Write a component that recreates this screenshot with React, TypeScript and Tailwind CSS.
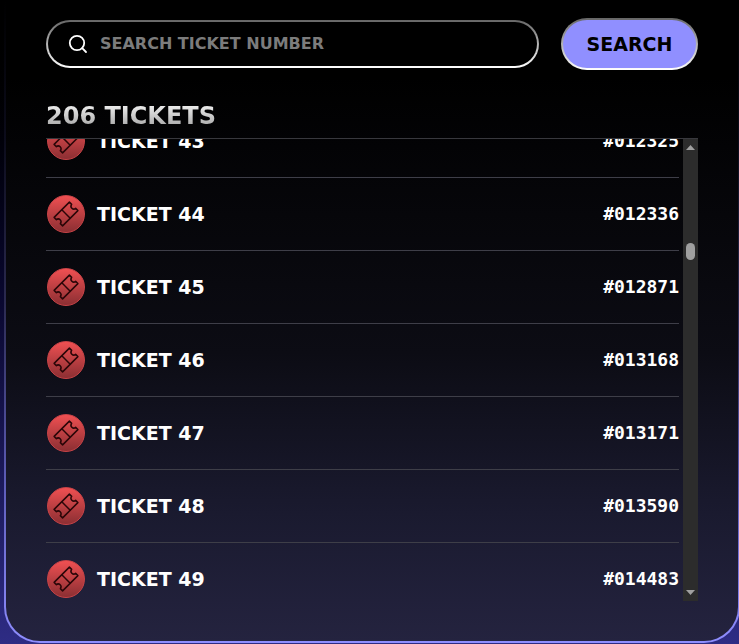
import { useLayoutEffect, useRef } from "react";

const tickets = [
  { name: "TICKET 43", number: "#012325" },
  { name: "TICKET 44", number: "#012336" },
  { name: "TICKET 45", number: "#012871" },
  { name: "TICKET 46", number: "#013168" },
  { name: "TICKET 47", number: "#013171" },
  { name: "TICKET 48", number: "#013590" },
  { name: "TICKET 49", number: "#014483" },
];

function TicketIcon() {
  return (
    <span className="flex size-[38px] shrink-0 items-center justify-center rounded-full border border-[#c94347] bg-linear-to-b from-[#f05052] to-[#8c2f33]">
      <svg viewBox="-14 -14 28 28" className="size-7" fill="none" stroke="#2a0608" strokeWidth="1.5" strokeLinejoin="round" aria-hidden="true">
        <g transform="rotate(-45)">
          <path d="M-10.8 -6H10.8V-2.8C7.4 -2.4 7.4 2.4 10.8 2.8V6H-10.8V2.8C-7.4 2.4 -7.4 -2.4 -10.8 -2.8Z" />
          <path d="M0 -6V6" />
        </g>
      </svg>
    </span>
  );
}

function SearchIcon() {
  return (
    <svg viewBox="0 0 20 20" className="size-5 shrink-0" fill="none" stroke="white" strokeWidth="1.8" aria-hidden="true">
      <circle cx="9" cy="9" r="7.2" />
      <path d="M14.2 14.2L18 18" strokeLinecap="round" />
    </svg>
  );
}

function ScrollTrack() {
  return (
    <div className="flex w-[15px] flex-col items-center bg-[#2c2c2c] py-1.5" aria-hidden="true">
      <svg viewBox="0 0 9 5" className="h-[5px] w-[9px]" fill="#a0a0a0">
        <path d="M0 5L4.5 0L9 5Z" />
      </svg>
      <div className="flex flex-1 flex-col pt-[93px]">
        <div className="h-[17px] w-[9px] rounded-full bg-[#9f9f9f]" />
      </div>
      <svg viewBox="0 0 9 5" className="h-[5px] w-[9px]" fill="#a0a0a0">
        <path d="M0 0L4.5 5L9 0Z" />
      </svg>
    </div>
  );
}

export default function App() {
  const list = useRef<HTMLUListElement>(null);

  useLayoutEffect(() => {
    if (list.current) list.current.scrollTop = 34;
  }, []);

  return (
    <div className="min-h-screen overflow-hidden bg-linear-to-b from-black via-[#0c0a35] to-[#2e2c84] pb-px pl-1 font-['DejaVu_Sans',sans-serif] font-bold text-white">
      <main className="-mr-px rounded-b-[36px] border-2 border-t-0 border-transparent px-10 pt-[18px] pb-10 [background:linear-gradient(#000_0%,#000_12%,#0c0c14_55%,#1a1a2f_80%,#24233f_100%)_padding-box,linear-gradient(#000_0%,#0c0c1c_22%,#2b2a50_47%,#5f5ebb_76%,#8f8eff_100%)_border-box]">
        <form className="flex items-center gap-[22px]" onSubmit={(e) => e.preventDefault()}>
          <label className="flex h-12 min-w-0 flex-1 items-center gap-3 rounded-full border-2 border-transparent px-5 [background:linear-gradient(#000,#000)_padding-box,linear-gradient(#666,#fff)_border-box]">
            <SearchIcon />
            <input
              type="text"
              aria-label="Search ticket number"
              placeholder="SEARCH TICKET NUMBER"
              className="min-w-0 flex-1 bg-transparent text-base text-white outline-none placeholder:text-[#7c7c7c]"
            />
          </label>
          <button
            type="submit"
            className="h-[52px] w-[137px] rounded-full border-2 border-transparent text-[19px] text-black [background:linear-gradient(#908fff,#908fff)_padding-box,linear-gradient(#666,#fff)_border-box]"
          >
            SEARCH
          </button>
        </form>

        <h2 className="mt-[30px] border-b border-[#38383d] pb-1.5">
          <span className="block bg-linear-to-b from-white to-[#999] bg-clip-text text-2xl text-transparent">
            206 TICKETS
          </span>
        </h2>

        <div className="flex h-[462px] gap-1">
          <ul ref={list} className="h-full flex-1 overflow-y-auto [scrollbar-width:none]">
            {tickets.map((ticket) => (
              <li key={ticket.name} className="flex h-[73px] items-center gap-3 border-b border-[#3e3e48] pl-px">
                <TicketIcon />
                <span className="flex-1 text-[19px]">{ticket.name}</span>
                <span className="font-['DejaVu_Sans_Mono',monospace] text-lg">{ticket.number}</span>
              </li>
            ))}
          </ul>
          <ScrollTrack />
        </div>
      </main>
    </div>
  );
}
